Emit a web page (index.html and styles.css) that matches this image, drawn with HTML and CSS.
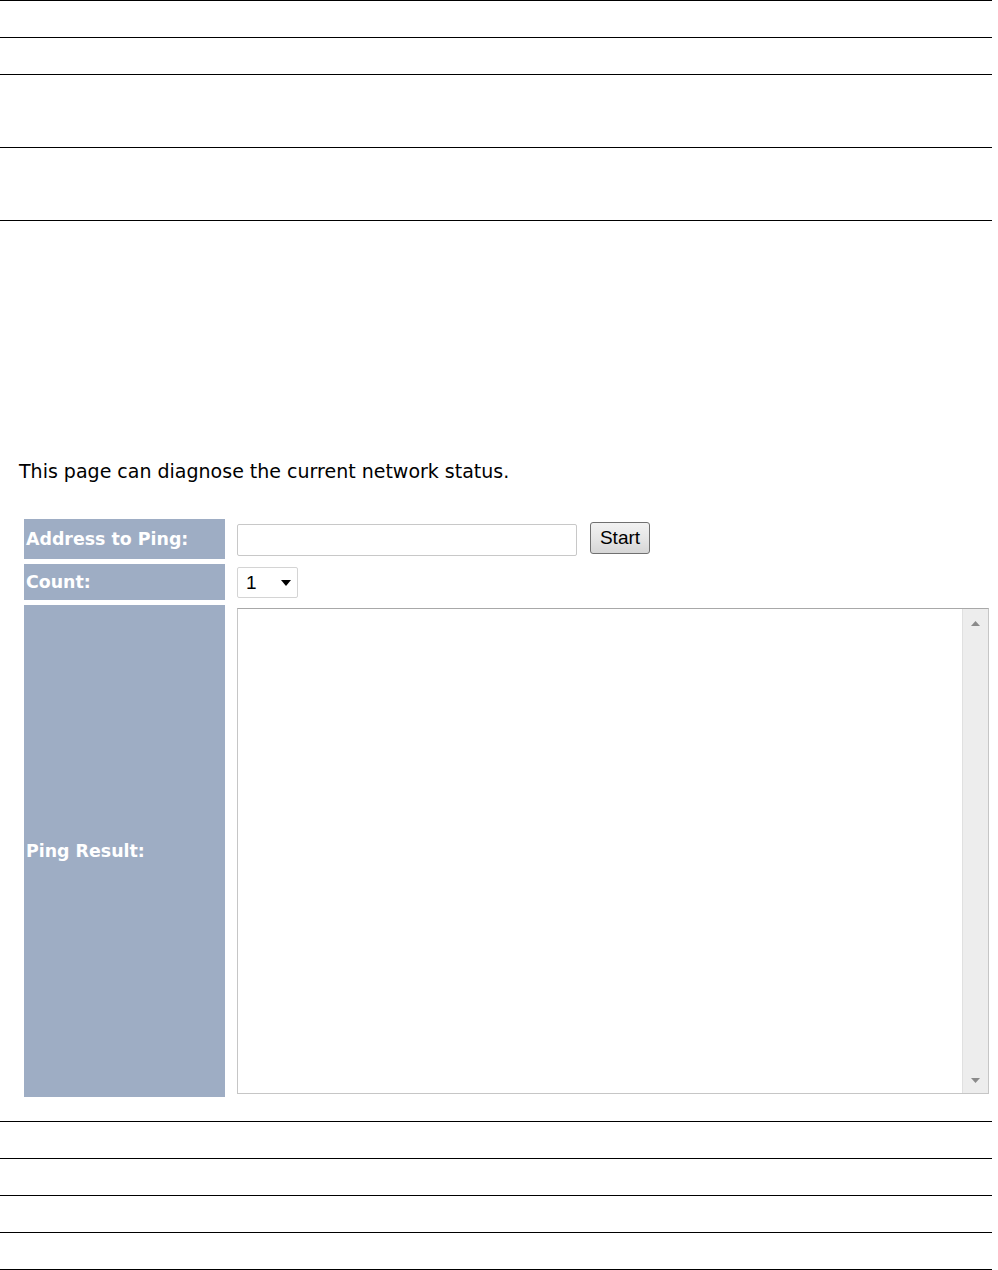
FILE: index.html
```html
<!DOCTYPE html>
<html lang="en">
<head>
    <meta charset="UTF-8">
    <title>Ping Test</title>
    <link rel="stylesheet" href="styles.css">
</head>
<body>
    <div class="rules top">
        <div class="rule"></div>
        <div class="rule"></div>
        <div class="rule tall"></div>
        <div class="rule tall"></div>
    </div>

    <div class="content">
        <p class="intro">This page can diagnose the current network status.</p>

        <div class="form">
            <div class="label">Address to Ping:</div>
            <div class="field">
                <div class="text-input"></div>
                <div class="button">Start</div>
            </div>

            <div class="label">Count:</div>
            <div class="field">
                <div class="select">
                    <span>1</span>
                    <svg width="10" height="6" viewBox="0 0 10 6"><path d="M0 0h10L5 6z" fill="#000"/></svg>
                </div>
            </div>

            <div class="label">Ping Result:</div>
            <div class="field area-cell">
                <div class="textarea">
                    <div class="area-body"></div>
                    <div class="scrollbar">
                        <svg width="9" height="5" viewBox="0 0 9 5"><path d="M0 5h9L4.5 0z" fill="#8a8a8a"/></svg>
                        <svg width="9" height="5" viewBox="0 0 9 5"><path d="M0 0h9L4.5 5z" fill="#8a8a8a"/></svg>
                    </div>
                </div>
            </div>
        </div>
    </div>

    <div class="rules bottom">
        <div class="rule"></div>
        <div class="rule"></div>
        <div class="rule"></div>
        <div class="rule"></div>
    </div>
</body>
</html>
```

FILE: styles.css
```css
body {
    margin: 0;
    font-family: "DejaVu Sans", Verdana, sans-serif;
    color: #000;
    background: #fff;
}
.rules {
    width: 992px;
    border-bottom: 1px solid #000;
}
.rule {
    height: 36px;
    border-top: 1px solid #000;
}
.rule.tall {
    height: 72px;
}
.rules.bottom {
    margin-top: 24px;
}
.content {
    padding: 0 0 0 19px;
}
.intro {
    margin: 0;
    padding-top: 240px;
    font-size: 19px;
    line-height: 20px;
}
.form {
    display: grid;
    grid-template-columns: 201px 1fr;
    grid-template-rows: 40px 36px 492px;
    column-gap: 12px;
    row-gap: 5px;
    margin: 38px 0 0 5px;
    width: 965px;
}
.label {
    background: #9eadc4;
    color: #fff;
    font-weight: bold;
    font-size: 17.4px;
    padding-left: 2px;
    display: flex;
    align-items: center;
}
.field {
    display: flex;
    align-items: flex-start;
    padding-top: 3px;
}
.text-input {
    width: 338px;
    height: 30px;
    border: 1px solid #c8c8c8;
    border-radius: 2px;
    margin-top: 2px;
}
.button {
    margin-left: 13px;
    box-sizing: border-box;
    width: 60px;
    height: 32px;
    border: 1px solid #707070;
    border-radius: 3px;
    background: linear-gradient(#f2f2f2, #e6e6e6 50%, #d6d6d6);
    font-family: "Liberation Sans", Arial, sans-serif;
    font-size: 19px;
    display: flex;
    align-items: center;
    justify-content: center;
}
.select {
    box-sizing: border-box;
    width: 61px;
    height: 31px;
    border: 1px solid #d4d4d4;
    border-radius: 2px;
    display: flex;
    align-items: center;
    justify-content: space-between;
    padding: 0 6px 0 8px;
    font-family: "Liberation Sans", Arial, sans-serif;
    font-size: 19px;
}
.area-cell {
    padding-bottom: 3px;
}
.textarea {
    box-sizing: border-box;
    width: 752px;
    height: 486px;
    border: 1px solid #c6c6c6;
    border-top-color: #a8a8a8;
    display: flex;
}
.area-body {
    flex: 1;
}
.scrollbar {
    width: 25px;
    background: #ededed;
    border-left: 1px solid #e0e0e0;
    display: flex;
    flex-direction: column;
    justify-content: space-between;
    align-items: center;
    padding: 12px 0 10px;
}
```
